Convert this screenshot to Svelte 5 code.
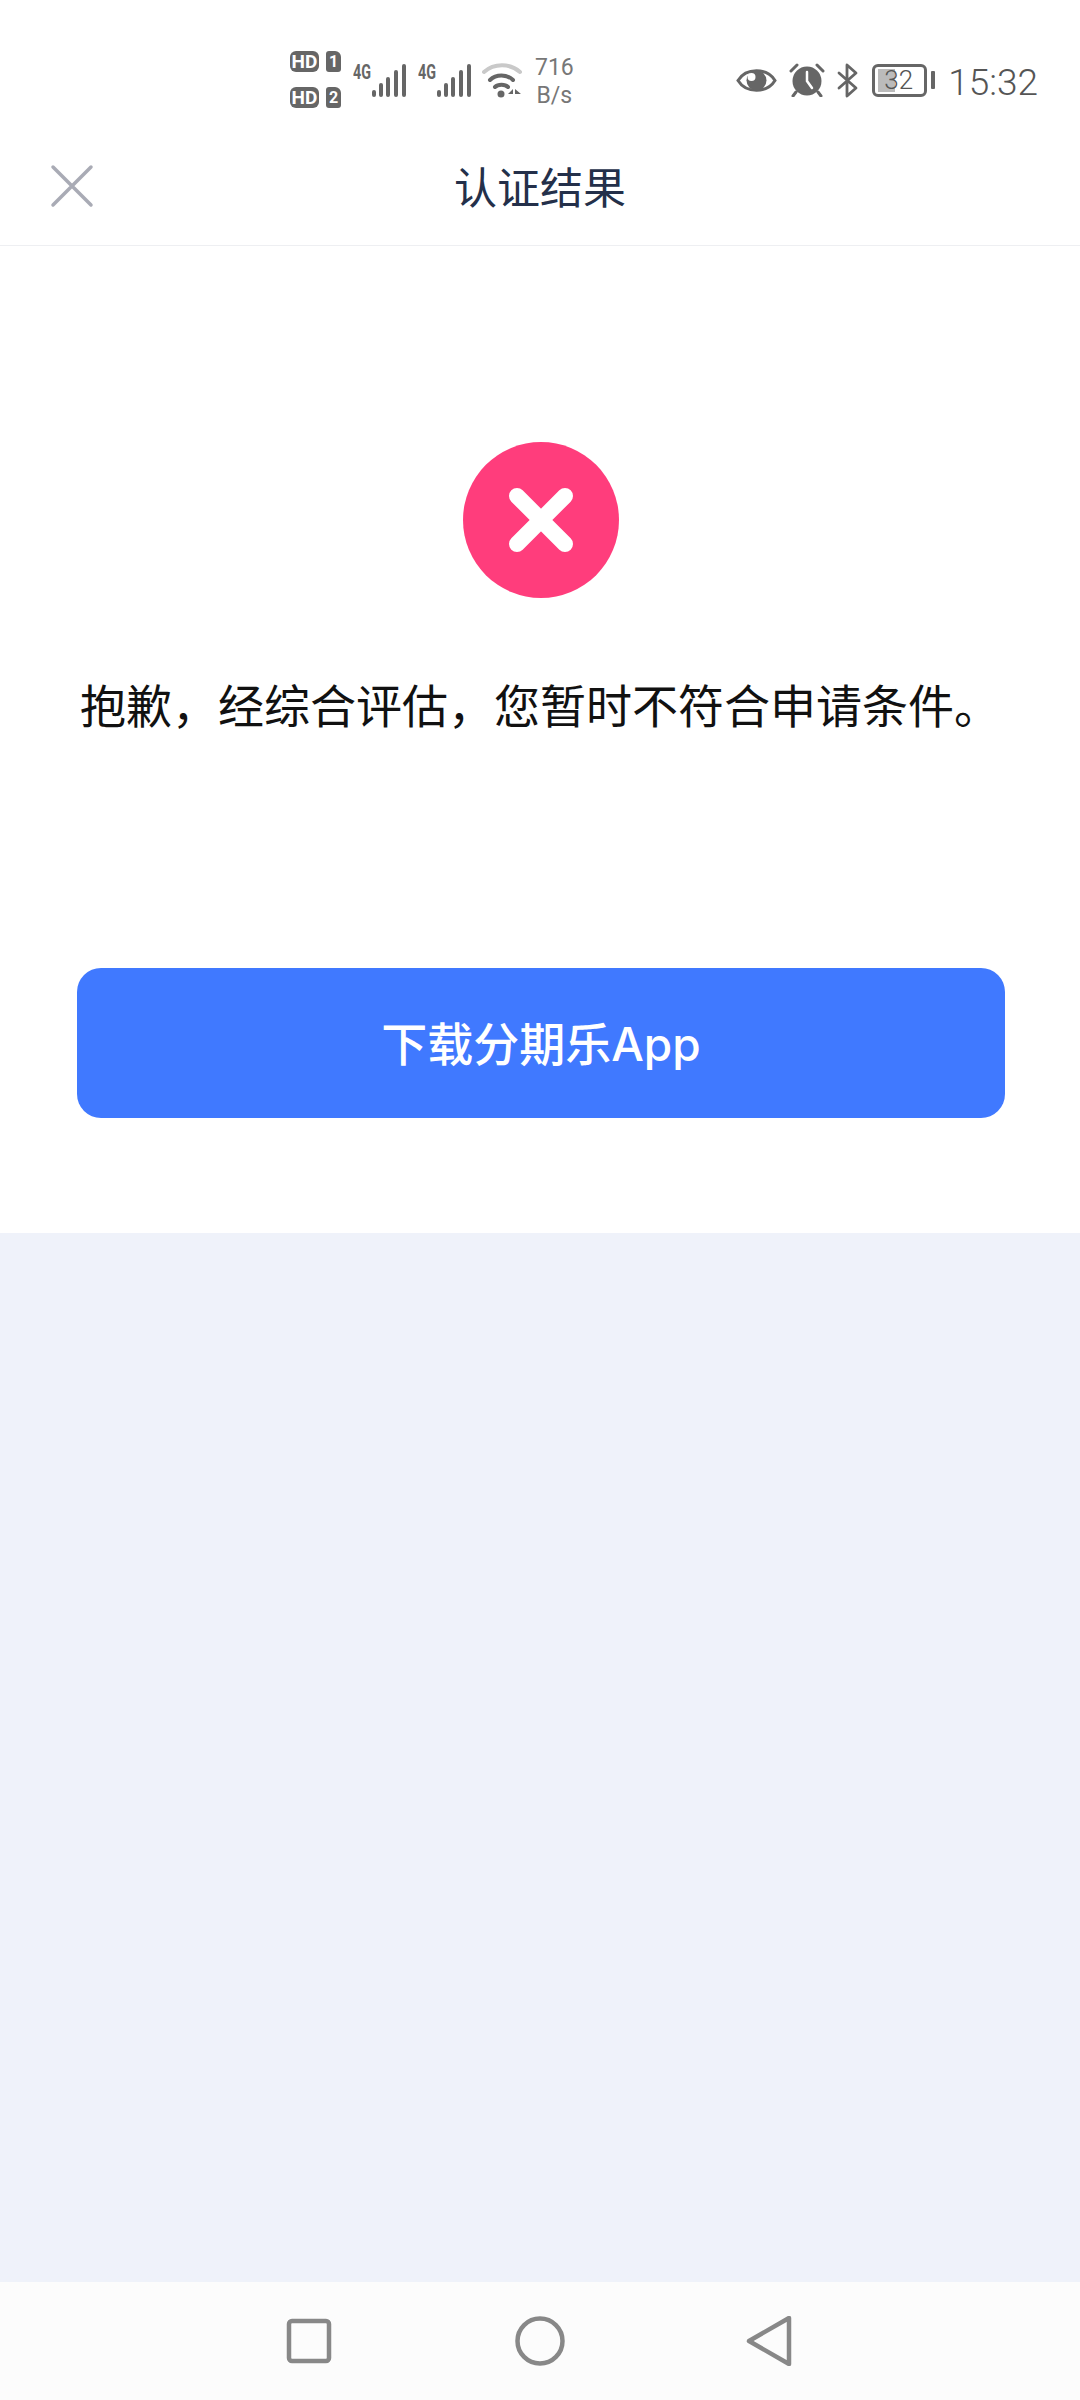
<script>
  const bars = [
    { x: 2, top: 26, w: 4 },
    { x: 9, top: 19, w: 4 },
    { x: 16, top: 13, w: 4 },
    { x: 24, top: 6, w: 4 },
    { x: 32, top: 0, w: 4 }
  ]
  const signals = [0, 1]
</script>

<div class="page">
  <div class="status-bar">
    <div class="status-left">
      <div class="sims">
        <div class="sim"><span class="hd">HD</span><span class="slot">1</span></div>
        <div class="sim"><span class="hd">HD</span><span class="slot">2</span></div>
      </div>
      {#each signals as s (s)}
        <svg class="signal" width="53" height="42" viewBox="0 -8 53 42">
          <text x="0" y="16" class="net" textLength="18" lengthAdjust="spacingAndGlyphs">4G</text>
          {#each bars as b}
            <rect x={b.x + 17} y={b.top + 1} width={b.w} height={33 - b.top} rx="2" fill="#666" />
          {/each}
        </svg>
      {/each}
      <svg class="wifi" width="40" height="36" viewBox="0 0 40 36" fill="none" stroke-linecap="round">
        <path d="M2 9C12 0 28 0 38 9" stroke="#c9c9c9" stroke-width="4" />
        <path d="M8 17C14 11 25 11 31 17" stroke="#666" stroke-width="4" />
        <path d="M13 24C16 21 23 21 26 24" stroke="#666" stroke-width="4" />
        <circle cx="19" cy="31" r="3.5" fill="#666" />
        <path d="M31 26L26 31H31ZM33 36V26L39 31H33Z" fill="#666" />
      </svg>
      <div class="speed"><span>716</span><span>B/s</span></div>
    </div>
    <div class="status-right">
      <svg width="41" height="25" viewBox="0 0 41 25" fill="none">
        <path d="M2 12.5C10 -0.5 31 -0.5 39 12.5C31 25.5 10 25.5 2 12.5Z" stroke="#666" stroke-width="3" />
        <circle cx="20.500" cy="12.500" r="10" fill="#666" />
        <circle cx="15.500" cy="9" r="4" fill="#fff" />
      </svg>
      <svg width="36" height="34" viewBox="0 0 36 34" fill="none" stroke-linecap="round">
        <circle cx="18" cy="18" r="14.500" fill="#666" />
        <path d="M18 9V18L23 25" stroke="#fff" stroke-width="2.500" />
        <path d="M2 8L8 2M28 2L34 8M7 29L4 33M29 29L32 33" stroke="#666" stroke-width="3" />
      </svg>
      <svg width="21" height="35" viewBox="0 0 21 35" fill="none" stroke="#666" stroke-width="2.800" stroke-linecap="round" stroke-linejoin="round">
        <path d="M2 10L19 25L10 33V2L19 10L2 25" />
      </svg>
      <div class="battery">
        <div class="cell">
          <div class="level"></div>
          <span class="pct">32</span>
        </div>
        <div class="nub"></div>
      </div>
      <span class="time">15:32</span>
    </div>
  </div>

  <header class="top-bar">
    <svg class="close" width="44" height="44" viewBox="0 0 44 44" stroke="#a9abb5" stroke-width="3.500" stroke-linecap="round">
      <path d="M3 3L41 41M41 3L3 41" />
    </svg>
    <h1>认证结果</h1>
  </header>

  <section class="result">
    <svg class="fail-icon" width="156" height="156" viewBox="0 0 156 156">
      <circle cx="78" cy="78" r="78" fill="#ff3d7c" />
      <path d="M54 54L102 102M102 54L54 102" stroke="#fff" stroke-width="16" stroke-linecap="round" />
    </svg>
    <p class="message">抱歉，经综合评估，您暂时不符合申请条件。</p>
    <button class="download" type="button">下载分期乐App</button>
  </section>

  <div class="filler"></div>

  <nav class="nav-bar">
    <svg width="50" height="50" viewBox="0 0 50 50" fill="none" stroke="#888" stroke-width="4.500">
      <rect x="5" y="5" width="40" height="40" rx="3" />
    </svg>
    <svg width="50" height="50" viewBox="0 0 50 50" fill="none" stroke="#888" stroke-width="4.500">
      <circle cx="25" cy="25" r="22.500" />
    </svg>
    <svg width="50" height="50" viewBox="0 0 50 50" fill="none" stroke="#888" stroke-width="4.500" stroke-linejoin="round">
      <path d="M3 25L43 2V48Z" />
    </svg>
  </nav>
</div>

<style>
  :global(body) {
    margin: 0;
    background: #fff;
  }

  .page {
    width: 1080px;
    height: 2400px;
    display: flex;
    flex-direction: column;
    font-family: "Noto Sans CJK SC", "Noto Sans", sans-serif;
  }

  .status-bar {
    height: 130px;
    display: flex;
    align-items: flex-start;
    justify-content: space-between;
    padding: 51px 42px 0 290px;
    box-sizing: border-box;
    color: #666;
    font-family: Roboto, sans-serif;
  }

  .status-left {
    display: flex;
    align-items: flex-start;
    gap: 12px;
  }

  .sims {
    display: flex;
    flex-direction: column;
    gap: 15px;
  }

  .sim {
    display: flex;
    gap: 7px;
  }

  .hd,
  .slot {
    height: 21px;
    background: #666;
    color: #fff;
    font-size: 19px;
    font-weight: 700;
    line-height: 21px;
    text-align: center;
  }

  .hd {
    width: 29px;
    border-radius: 6px;
  }

  .slot {
    width: 15px;
    border-radius: 3px 6px 3px 3px;
    font-size: 16px;
  }

  .signal {
    margin-top: 4px;
  }

  .net {
    font-family: Roboto, sans-serif;
    font-size: 21px;
    font-weight: 700;
    fill: #666;
  }

  .wifi {
    margin: 12px 1px 0 -1px;
  }

  .speed {
    display: flex;
    flex-direction: column;
    align-items: center;
    margin-top: 3px;
    font-size: 23px;
    line-height: 28px;
    font-weight: 400;
    color: #777;
  }

  .status-right {
    display: flex;
    align-items: center;
    gap: 12px;
    margin-top: 11px;
    height: 36px;
  }

  .battery {
    display: flex;
    align-items: center;
    gap: 4px;
    margin-left: 2px;
    margin-right: 1px;
  }

  .cell {
    position: relative;
    width: 55px;
    height: 33px;
    box-sizing: border-box;
    border: 3px solid #666;
    border-radius: 6px;
    display: flex;
    align-items: center;
    justify-content: flex-end;
    padding-right: 11px;
  }

  .level {
    position: absolute;
    left: 3px;
    top: 2px;
    bottom: 2px;
    width: 17px;
    background: #bbb;
  }

  .pct {
    position: relative;
    font-size: 26px;
    line-height: 27px;
    font-weight: 300;
    color: #555;
  }

  .nub {
    width: 4px;
    height: 18px;
    border-radius: 1px;
    background: #666;
  }

  .time {
    padding-top: 6px;
    font-size: 37px;
    line-height: 36px;
    font-weight: 300;
    color: #555;
  }

  .top-bar {
    height: 116px;
    box-sizing: border-box;
    border-bottom: 1px solid #eeeff2;
    padding-bottom: 5px;
    display: flex;
    align-items: center;
    justify-content: center;
    position: relative;
  }

  .top-bar h1 {
    margin: 0;
    font-size: 43px;
    font-weight: 400;
    color: #24304a;
  }

  .close {
    position: absolute;
    left: 50px;
    top: 34px;
  }

  .result {
    display: flex;
    flex-direction: column;
    align-items: center;
    padding: 196px 0 115px;
    background: #fff;
  }

  .fail-icon {
    display: block;
    margin-left: 2px;
  }

  .message {
    margin: 73px 0 233px;
    font-size: 46px;
    line-height: 64px;
    font-weight: 400;
    color: #111;
  }

  .download {
    width: 928px;
    height: 150px;
    margin-left: 2px;
    padding-bottom: 5px;
    border: 0;
    border-radius: 24px;
    background: #4079ff;
    color: #fff;
    font-family: Inter, "Noto Sans CJK SC", sans-serif;
    font-size: 46px;
    font-weight: 500;
  }

  .filler {
    flex: 1;
    background: #eff2fa;
  }

  .nav-bar {
    height: 118px;
    flex-shrink: 0;
    background: #fcfcfc;
    display: flex;
    align-items: center;
    justify-content: center;
    gap: 181px;
  }
</style>
